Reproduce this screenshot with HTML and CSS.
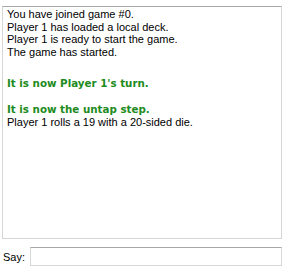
FILE: index.html
```html
<!DOCTYPE html>
<html>
<head>
<meta charset="utf-8">
<link rel="stylesheet" href="styles.css">
</head>
<body>
<div class="panel">
  <div class="log">
    <div class="msg">You have joined game #0.</div>
    <div class="msg">Player 1 has loaded a local deck.</div>
    <div class="msg">Player 1 is ready to start the game.</div>
    <div class="msg">The game has started.</div>
    <div class="msg event first">It is now Player 1's turn.</div>
    <div class="msg event">It is now the untap step.</div>
    <div class="msg">Player 1 rolls a 19 with a 20-sided die.</div>
  </div>
  <div class="say">
    <label class="say-label">Say:</label>
    <input class="say-input" type="text">
  </div>
</div>
</body>
</html>
```
FILE: styles.css
```css
html, body {
  margin: 0;
  padding: 0;
  background: #ffffff;
}
.panel {
  width: 280px;
  padding: 6px 0 0 2px;
  font-family: "Liberation Sans", Arial, sans-serif;
  font-size: 11px;
  color: #000;
}
.log {
  height: 229px;
  border: 1px solid #d6d6d6;
  border-top-color: #a8a8a8;
  padding: 1px 4px;
  line-height: 12.5px;
}
.msg.event {
  color: #218b21;
  font-weight: bold;
  font-family: "DejaVu Sans", Verdana, sans-serif;
  font-size: 10.3px;
  line-height: 13px;
  margin-top: 13px;
}
.msg.event.first {
  margin-top: 18.5px;
}
.say {
  display: flex;
  align-items: center;
  margin-top: 8px;
}
.say-label {
  flex: none;
  width: 27px;
  padding-left: 1px;
}
.say-input {
  flex: 1;
  height: 19px;
  box-sizing: border-box;
  margin: 0;
  border: 1px solid #d8d8d8;
  border-top-color: #a8a8a8;
  padding: 0 2px;
}
```
